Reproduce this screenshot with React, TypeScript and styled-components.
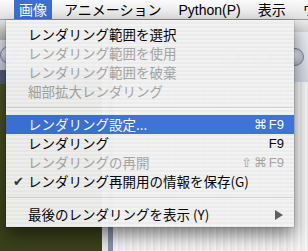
import React from 'react';
import styled, { createGlobalStyle } from 'styled-components';

const GlobalStyle = createGlobalStyle`
  html, body {
    margin: 0;
    padding: 0;
    background: #3d4420;
  }
  body {
    font-family: "Liberation Sans", "Noto Sans CJK JP", sans-serif;
  }
`;

type Item =
  | {
      kind: 'item';
      label: string;
      shortcut?: string;
      cmd?: boolean;
      shift?: boolean;
      disabled?: boolean;
      active?: boolean;
      checked?: boolean;
      submenu?: boolean;
    }
  | { kind: 'sep' };

const items: Item[] = [
  { kind: 'item', label: 'レンダリング範囲を選択' },
  { kind: 'item', label: 'レンダリング範囲を使用', disabled: true },
  { kind: 'item', label: 'レンダリング範囲を破棄', disabled: true },
  { kind: 'item', label: '細部拡大レンダリング', disabled: true },
  { kind: 'sep' },
  { kind: 'item', label: 'レンダリング設定...', shortcut: 'F9', cmd: true, active: true },
  { kind: 'item', label: 'レンダリング', shortcut: 'F9' },
  { kind: 'item', label: 'レンダリングの再開', shortcut: 'F9', cmd: true, shift: true, disabled: true },
  { kind: 'item', label: 'レンダリング再開用の情報を保存(G)', checked: true },
  { kind: 'sep' },
  { kind: 'item', label: '最後のレンダリングを表示 (Y)', submenu: true },
];

const menus = ['画像', 'アニメーション', 'Python(P)', '表示', 'ウインドウ'];

export default function App() {
  return (
    <>
      <GlobalStyle />
      <Screen>
        <MenuBar>
          {menus.map((m, i) => (
            <MenuTitle key={m} $open={i === 0}>{m}</MenuTitle>
          ))}
        </MenuBar>
        <Desktop>
          <LeftWindow>
            <LTitle />
            <LToolbar>
              <RoundButton />
            </LToolbar>
            <LStrip />
            <Olive />
          </LeftWindow>
          <RedEdge />
          <Gutter />
          <BlueBar />
          <RightWindow>
            <RTitle />
            <RToolbar>
              <RoundButton />
              <RoundButton />
              <RoundButton />
            </RToolbar>
            <Paper />
          </RightWindow>
        </Desktop>

        <Dropdown>
          {items.map((it, i) =>
            it.kind === 'sep' ? (
              <Separator key={i} />
            ) : (
              <Row key={i} $active={!!it.active} $disabled={!!it.disabled}>
                <Check>{it.checked ? '✔' : ''}</Check>
                <Label>{it.label}</Label>
                {it.shortcut && (
                  <Shortcut>
                    {it.shift && <Sym>⇧</Sym>}
                    {it.cmd && <Sym>⌘</Sym>}
                    {it.shortcut}
                  </Shortcut>
                )}
                {it.submenu && (
                  <Arrow viewBox="0 0 8 10" width="8" height="10">
                    <path d="M0 0 L8 5 L0 10 Z" fill="#5a5a5a" />
                  </Arrow>
                )}
              </Row>
            )
          )}
        </Dropdown>
      </Screen>
    </>
  );
}

const Screen = styled.div`
  position: relative;
  width: 308px;
  height: 251px;
  overflow: hidden;
  display: flex;
  flex-direction: column;
`;

const MenuBar = styled.div`
  height: 20px;
  display: flex;
  align-items: stretch;
  gap: 7px;
  padding-left: 14px;
  background: linear-gradient(#fbfbfb, #ececec 60%, #e2e2e2);
  border-bottom: 1px solid #9c9c9c;
  box-sizing: border-box;
  font-size: 14px;
  color: #000;
  white-space: nowrap;
`;

const MenuTitle = styled.div<{ $open: boolean }>`
  padding: 0 5px;
  line-height: 20px;
  background: ${p => (p.$open ? '#3a70d6' : 'transparent')};
  color: ${p => (p.$open ? '#fff' : '#000')};
`;

const Desktop = styled.div`
  flex: 1;
  display: flex;
`;

const LeftWindow = styled.div`
  width: 101px;
  display: flex;
  flex-direction: column;
`;

const LTitle = styled.div`
  height: 20px;
  background: linear-gradient(#e4e4e4, #b4b4b4);
`;

const LToolbar = styled.div`
  height: 30px;
  display: flex;
  align-items: center;
  background: linear-gradient(#dfe3ea, #c6ccd8);
`;

const LStrip = styled.div`
  height: 14px;
  background: #525c74;
`;

const Olive = styled.div`
  flex: 1;
  background: linear-gradient(#4a5226, #39401b);
`;

const RedEdge = styled.div`
  width: 1px;
  background: #d40000;
`;

const Gutter = styled.div`
  width: 6px;
  background: #e6e6e6;
`;

const BlueBar = styled.div`
  width: 5px;
  background: #8890aa;
`;

const RightWindow = styled.div`
  flex: 1;
  display: flex;
  flex-direction: column;
`;

const RTitle = styled.div`
  height: 12px;
  background: linear-gradient(#ececec, #d4d4d4);
`;

const RToolbar = styled.div`
  height: 50px;
  display: flex;
  align-items: center;
  justify-content: flex-end;
  gap: 14px;
  padding-right: 4px;
  background: linear-gradient(#e9ecf2, #cfd4de);
`;

const RoundButton = styled.div`
  width: 16px;
  height: 16px;
  border-radius: 50%;
  background: radial-gradient(circle at 40% 35%, #f4f6fa, #9aa2b4);
  border: 1px solid #7c8496;
`;

const Paper = styled.div`
  flex: 1;
  background: repeating-linear-gradient(90deg, #efefef 0 3px, #f6f6f6 3px 5px, #e9e9e9 5px 7px);
`;

const Dropdown = styled.div`
  position: absolute;
  left: 6px;
  top: 20px;
  width: 288px;
  padding: 5px 0 3px;
  box-sizing: border-box;
  background: repeating-linear-gradient(#f3f3f3 0 2px, #ececec 2px 4px);
  opacity: 0.97;
  box-shadow: 0 8px 16px rgba(0, 0, 0, 0.5), 0 0 0 0.5px rgba(0, 0, 0, 0.2);
  font-family: "Noto Sans CJK JP", "Liberation Sans", sans-serif;
  font-size: 13.5px;
`;

const Row = styled.div<{ $active: boolean; $disabled: boolean }>`
  height: 19px;
  display: flex;
  align-items: center;
  padding-right: 10px;
  background: ${p => (p.$active ? '#3a70d6' : 'transparent')};
  color: ${p => (p.$active ? '#fff' : p.$disabled ? '#a2a2a2' : '#000')};
  white-space: nowrap;
`;

const Check = styled.span`
  width: 22px;
  padding-left: 7px;
  box-sizing: border-box;
  font-family: "DejaVu Sans", sans-serif;
  font-size: 13px;
  color: #333;
`;

const Label = styled.span`
  flex: 1;
  line-height: 19px;
`;

const Shortcut = styled.span`
  font-family: "Liberation Sans", sans-serif;
  font-size: 13px;
  display: flex;
  align-items: center;
`;

const Sym = styled.span`
  font-family: "DejaVu Sans", sans-serif;
  font-size: 13px;
  margin-right: 2px;
`;

const Separator = styled.div`
  height: 1px;
  margin: 6px 1px 6px;
  background: #cfcfcf;
  border-bottom: 1px solid #f8f8f8;
`;

const Arrow = styled.svg`
  margin-right: 1px;
`;
